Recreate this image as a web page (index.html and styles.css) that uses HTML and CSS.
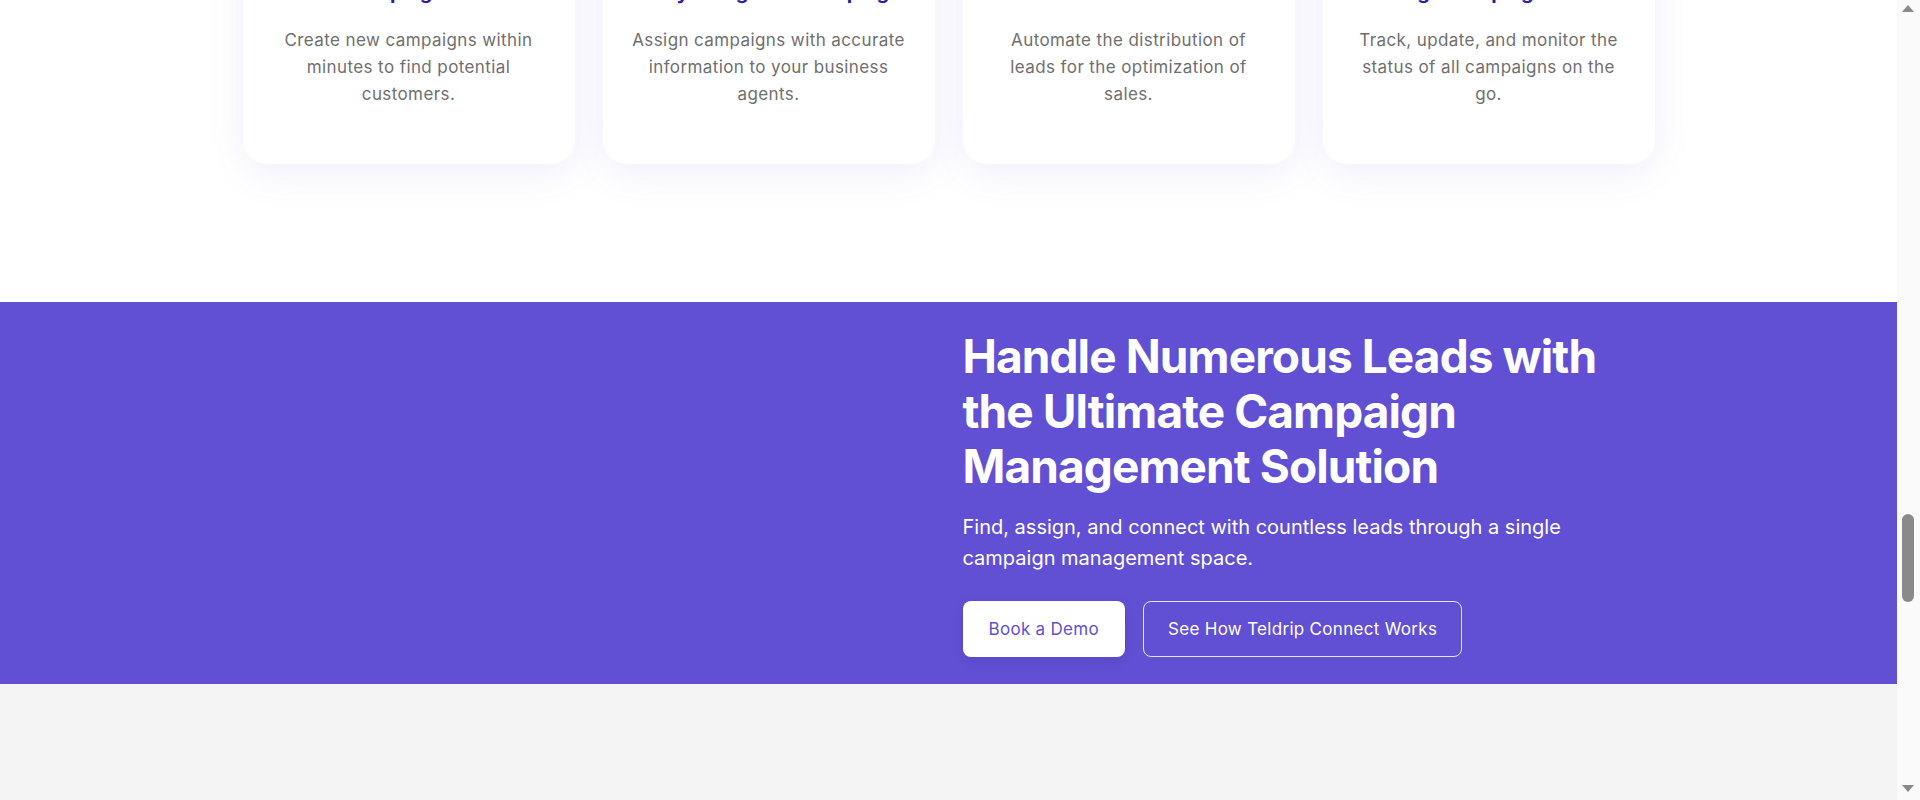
FILE: index.html
```html
<!DOCTYPE html>
<html lang="en">
<head>
<meta charset="utf-8">
<title>Teldrip Connect – Campaign Management</title>
<link rel="stylesheet" href="styles.css">
</head>
<body>
<main class="page">
  <section class="features">
    <div class="container cards">
      <article class="card">
        <div class="card-icon"></div>
        <h3 class="card-title">Quick Campaign Creation</h3>
        <p class="card-text">Create new campaigns within minutes to find potential customers.</p>
      </article>
      <article class="card">
        <div class="card-icon"></div>
        <h3 class="card-title">Easily Assign the Campaigns</h3>
        <p class="card-text">Assign campaigns with accurate information to your business agents.</p>
      </article>
      <article class="card">
        <div class="card-icon"></div>
        <h3 class="card-title">Automate Lead Distribution</h3>
        <p class="card-text">Automate the distribution of leads for the optimization of sales.</p>
      </article>
      <article class="card">
        <div class="card-icon"></div>
        <h3 class="card-title">Manage Campaign Status</h3>
        <p class="card-text">Track, update, and monitor the status of all campaigns on the go.</p>
      </article>
    </div>
  </section>

  <section class="cta">
    <div class="container cta-grid">
      <div class="cta-media"></div>
      <div class="cta-content">
        <h2 class="cta-title">Handle Numerous Leads with the Ultimate Campaign Management Solution</h2>
        <p class="cta-text">Find, assign, and connect with countless leads through a single campaign management space.</p>
        <div class="cta-actions">
          <a class="btn btn-light" href="#">Book a Demo</a>
          <a class="btn btn-outline" href="#">See How Teldrip Connect Works</a>
        </div>
      </div>
    </div>
  </section>

  <footer class="site-footer"></footer>
</main>

<aside class="scrollbar" aria-hidden="true">
  <span class="sb-arrow sb-up"></span>
  <span class="sb-thumb"></span>
  <span class="sb-arrow sb-down"></span>
</aside>
</body>
</html>
```

FILE: styles.css
```css
* {
  box-sizing: border-box;
}

html,
body {
  overflow: hidden;
}

body {
  margin: 0;
  font-family: Inter, "Noto Sans", Arial, sans-serif;
  color: #222;
  background: #ffffff;
}

.page {
  margin-right: 23px;
}

.container {
  max-width: 1412px;
  margin: 0 auto;
}

/* feature cards */
.features {
  padding-bottom: 138px;
}

.cards {
  display: grid;
  grid-template-columns: repeat(4, minmax(0, 1fr));
  gap: 28px;
  margin-top: -150px;
}

.card {
  background: #fff;
  border-radius: 24px;
  box-shadow: 0 10px 40px rgba(97, 80, 211, 0.09);
  padding: 40px 28px 56px;
  text-align: center;
}

.card-icon {
  width: 64px;
  height: 64px;
  margin: 0 auto 24px;
  border-radius: 16px;
  background: #efedfb;
}

.card-title {
  margin: 0 0 21px;
  font-size: 20px;
  line-height: 28px;
  font-weight: 700;
  color: #2e1f94;
  white-space: nowrap;
}

.card-text {
  margin: 0;
  font-size: 17px;
  line-height: 27px;
  letter-spacing: 0.4px;
  color: #6f6f6f;
}

/* call to action */
.cta {
  background: #6150d3;
  color: #fff;
  padding: 27px 0;
}

.cta-grid {
  display: grid;
  grid-template-columns: 1fr 1fr;
  gap: 28px;
}

.cta-title {
  margin: 0;
  font-size: 46px;
  line-height: 55px;
  font-weight: 700;
  max-width: 680px;
  letter-spacing: -0.9px;
}

.cta-text {
  margin: 18px 0 0;
  font-size: 20px;
  line-height: 31px;
  max-width: 620px;
}

.cta-actions {
  display: flex;
  gap: 18px;
  margin-top: 27px;
}

.btn {
  display: inline-flex;
  align-items: center;
  height: 56px;
  padding: 0 24px;
  border-radius: 8px;
  font-size: 17px;
  letter-spacing: 0.3px;
  text-decoration: none;
}

.btn-light {
  padding: 0 26px;
  background: #fff;
  color: #6150d3;
  box-shadow: 0 4px 12px rgba(40, 20, 120, 0.12);
}

.btn-outline {
  color: #fff;
  border: 1px solid rgba(255, 255, 255, 0.85);
}

.site-footer {
  background: #f4f4f4;
  height: 400px;
}

/* window scrollbar as seen in the capture */
.scrollbar {
  position: fixed;
  top: 0;
  right: 0;
  width: 23px;
  height: 100vh;
  background: #fafafa;
}

.sb-arrow {
  position: absolute;
  left: 5px;
  width: 0;
  height: 0;
  border-left: 6px solid transparent;
  border-right: 6px solid transparent;
}

.sb-up {
  top: 5px;
  border-bottom: 7px solid #8a8a8a;
}

.sb-down {
  bottom: 8px;
  border-top: 7px solid #8a8a8a;
}

.sb-thumb {
  position: absolute;
  top: 514px;
  left: 5px;
  width: 12px;
  height: 88px;
  border-radius: 6px;
  background: #8a8a8a;
}
```
